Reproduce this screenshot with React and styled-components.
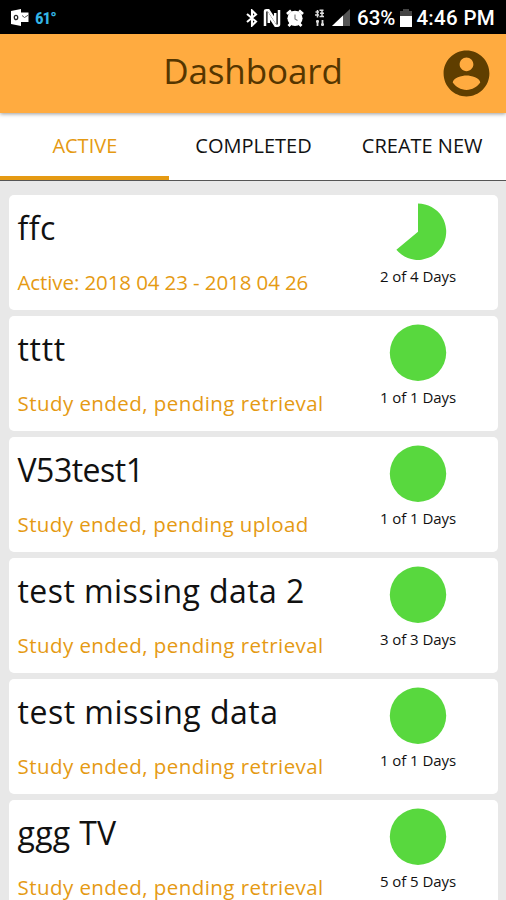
import React from 'react';
import styled, { createGlobalStyle, ThemeProvider } from 'styled-components';

const theme = {
  font: '"Open Sans", "Noto Sans", sans-serif',
  system: 'Roboto, "Liberation Sans", sans-serif',
  narrow: '"Roboto Condensed", "Liberation Sans Narrow", Roboto, sans-serif',
  header: '#ffab40',
  brown: '#5f3e00',
  accent: '#e59a13',
  green: '#58d83e',
};

const GlobalStyle = createGlobalStyle`
  * {
    box-sizing: border-box;
  }
  body {
    margin: 0;
    background: #e8e8e8;
  }
`;

const Screen = styled.div`
  display: flex;
  flex-direction: column;
  width: 506px;
  height: 900px;
  overflow: hidden;
  background: #e8e8e8;
  font-family: ${props => props.theme.font};
`;

const StatusBar = styled.div`
  display: flex;
  flex: none;
  align-items: center;
  justify-content: space-between;
  height: 34px;
  padding: 1px 11px 0 11px;
  background: #000;
  color: #fff;
  font-family: ${props => props.theme.system};
`;

const Group = styled.div`
  display: flex;
  align-items: center;
  gap: ${props => props.$gap || 0}px;
`;

const Temperature = styled.span`
  color: #33b5e5;
  font-family: ${props => props.theme.narrow};
  font-size: 17px;
  font-weight: 700;
  line-height: 20px;
  letter-spacing: -1px;
`;

const StatusText = styled.span`
  font-size: 20.5px;
  font-weight: 500;
  line-height: 24px;
  letter-spacing: ${props => props.$spacing || 0}px;
  white-space: nowrap;
`;

const AppBar = styled.header`
  display: grid;
  flex: none;
  grid-template-columns: 67px 1fr 67px;
  align-items: center;
  height: 79px;
  background: ${props => props.theme.header};
  box-shadow: 0 1px 4px rgba(0, 0, 0, 0.4);
  z-index: 1;
`;

const Title = styled.h1`
  grid-column: 2;
  margin: 0;
  padding-bottom: 6px;
  color: #553600;
  font-size: 35px;
  font-weight: 400;
  line-height: 44px;
  text-align: center;
  letter-spacing: -0.1px;
`;

const Tabs = styled.nav`
  display: grid;
  flex: none;
  grid-template-columns: repeat(3, 1fr);
  height: 68px;
  background: #fff;
  border-bottom: 1px solid #555;
`;

const Tab = styled.div`
  display: flex;
  align-items: center;
  justify-content: center;
  padding: 2px 0 0 1px;
  color: ${props => (props.$active ? props.theme.accent : '#111')};
  border-bottom: 4px solid ${props => (props.$active ? '#e59a13' : 'transparent')};
  font-size: 20px;
  white-space: nowrap;
`;

const List = styled.main`
  display: flex;
  flex-direction: column;
  gap: 6px;
  padding: 14px 8px 0 9px;
`;

const Card = styled.article`
  display: grid;
  flex: none;
  grid-template-columns: 1fr 160px;
  height: 115px;
  padding-left: 8.5px;
  background: #fff;
  border-radius: 5px;
`;

const Info = styled.div`
  display: flex;
  flex-direction: column;
`;

const Name = styled.h2`
  margin: 11px 0 0;
  color: #111;
  font-size: 32px;
  font-weight: 400;
  line-height: 44px;
  letter-spacing: ${props => props.$spacing}px;
  white-space: nowrap;
`;

const Status = styled.p`
  margin: 20px 0 0;
  color: ${props => props.theme.accent};
  font-size: 20.5px;
  line-height: 24px;
  letter-spacing: ${props => props.$spacing}px;
  white-space: nowrap;
`;

const Progress = styled.div`
  display: flex;
  flex-direction: column;
  align-items: center;
  padding-top: 8px;
`;

const Days = styled.span`
  margin-top: 4px;
  color: #111;
  font-size: 15px;
  font-weight: 500;
  line-height: 22px;
  letter-spacing: -0.05px;
  white-space: nowrap;
`;

const OutlookIcon = () => (
  <svg width="18" height="17" viewBox="0 0 18 17">
    <path d="M0 2L10 0V17L0 15Z" fill="#fff" />
    <path d="M10 3.5H17.5V13H10Z" fill="#fff" />
    <path d="M11 6.5L13.5 8.5L17.5 6" stroke="#555" fill="none" />
    <ellipse cx="5" cy="8.5" rx="1.7" ry="2.1" stroke="#222" strokeWidth="1.3" fill="none" />
  </svg>
);

const BluetoothIcon = () => (
  <svg width="12" height="18" viewBox="0 0 12 18">
    <path d="M1 5L10 12.5L6 16.5V1.5L10 5.5L1 13" stroke="#fff" strokeWidth="2.1" fill="none" />
  </svg>
);

const NfcIcon = () => (
  <svg width="18" height="18" viewBox="0 0 18 18">
    <path d="M2 17V2.5Q2 1.3 3.5 1.3H5.5L12.2 11.5V4" stroke="#fff" strokeWidth="2.5" fill="none" />
    <path d="M16 1V15.5Q16 16.7 14.5 16.7H12.5L5.8 6.5V14" stroke="#fff" strokeWidth="2.5" fill="none" />
  </svg>
);

const AlarmIcon = () => (
  <svg width="18" height="18" viewBox="0 0 18 18">
    <path d="M1 5L5 1.5M17 5L13 1.5M2.5 17L5 14.5M15.5 17L13 14.5" stroke="#fff" strokeWidth="2.8" />
    <circle cx="9" cy="9.3" r="7.6" fill="#fff" />
    <path d="M9 5.5V10L11.5 11.5" stroke="#777" strokeWidth="1.1" fill="none" />
  </svg>
);

const DataIcon = () => (
  <svg width="14" height="18" viewBox="-3 0 14 18">
    <path d="M1.5 3H5M5.5 1.2H9.5M1 6H5M6 4.3H10M5.5 7.5H10M3.5 1V8.5M8 1V8" stroke="#ddd" strokeWidth="1.5" />
    <path d="M3.5 11V17M8.5 11V17M2 12.5H5M7 15.5H10" stroke="#ddd" strokeWidth="1.8" />
  </svg>
);

const SignalIcon = () => (
  <svg width="18" height="17" viewBox="0 0 18 17">
    <path d="M0 17L18 0V17Z" fill="#555" />
    <path d="M0 17L11 6.6V17Z" fill="#fff" />
  </svg>
);

const BatteryIcon = () => (
  <svg width="12" height="18" viewBox="0 0 12 18">
    <path d="M3 0H9V2H12V18H0V2H3Z" fill="#444" />
    <path d="M0 7H12V18H0Z" fill="#fff" />
  </svg>
);

const AccountIcon = () => (
  <svg width="55" height="55" viewBox="0 0 24 24" fill={theme.brown}>
    <path d="M12 2C6.48 2 2 6.48 2 12s4.48 10 10 10 10-4.48 10-10S17.52 2 12 2zm0 3c1.66 0 3 1.34 3 3s-1.34 3-3 3-3-1.34-3-3 1.34-3 3-3zm0 14.2c-2.5 0-4.71-1.28-6-3.22.03-1.99 4-3.08 6-3.08 1.99 0 5.97 1.09 6 3.08-1.29 1.94-3.5 3.22-6 3.22z" />
  </svg>
);

// filled wedge going clockwise from twelve o'clock
const Pie = ({ value }) => {
  const r = 28.2;
  const angle = value * 2 * Math.PI;
  const x = 29 + r * Math.sin(angle);
  const y = 28.7 - r * Math.cos(angle);
  return (
    <svg width="58" height="58" viewBox="0 0 58 58" fill={theme.green}>
      {value >= 1
        ? <circle cx="29" cy="28.7" r={r} />
        : <path d={`M29 28.7V${28.7 - r}A${r} ${r} 0 ${value > 0.5 ? 1 : 0} 1 ${x} ${y}Z`} />}
    </svg>
  );
};

const studies = [
  { name: 'ffc', status: 'Active: 2018 04 23 - 2018 04 26', days: '2 of 4 Days', value: 0.639, nameSpacing: 0.5, statusSpacing: -0.1 },
  { name: 'tttt', status: 'Study ended, pending retrieval', days: '1 of 1 Days', value: 1, nameSpacing: 0.7, statusSpacing: 0.44 },
  { name: 'V53test1', status: 'Study ended, pending upload', days: '1 of 1 Days', value: 1, nameSpacing: -0.5, statusSpacing: 0.4 },
  { name: 'test missing data 2', status: 'Study ended, pending retrieval', days: '3 of 3 Days', value: 1, nameSpacing: 0.43, statusSpacing: 0.44 },
  { name: 'test missing data', status: 'Study ended, pending retrieval', days: '1 of 1 Days', value: 1, nameSpacing: 0.5, statusSpacing: 0.44 },
  { name: 'ggg TV', status: 'Study ended, pending retrieval', days: '5 of 5 Days', value: 1, nameSpacing: 0.3, statusSpacing: 0.44 },
];

export default () => (
  <ThemeProvider theme={theme}>
    <GlobalStyle />
    <Screen>
      <StatusBar>
        <Group $gap={6}>
          <OutlookIcon />
          <Temperature>61°</Temperature>
        </Group>
        <Group $gap={7}>
          <Group $gap={5}>
            <BluetoothIcon />
            <NfcIcon />
            <AlarmIcon />
          </Group>
          <DataIcon />
          <SignalIcon />
          <Group $gap={4.5}>
            <StatusText>63%</StatusText>
            <BatteryIcon />
            <StatusText $spacing={0.3}>4:46 PM</StatusText>
          </Group>
        </Group>
      </StatusBar>
      <AppBar>
        <Title>Dashboard</Title>
        <AccountIcon />
      </AppBar>
      <Tabs>
        <Tab $active>ACTIVE</Tab>
        <Tab>COMPLETED</Tab>
        <Tab>CREATE NEW</Tab>
      </Tabs>
      <List>
        {studies.map((study, i) => (
          <Card key={i}>
            <Info>
              <Name $spacing={study.nameSpacing}>{study.name}</Name>
              <Status $spacing={study.statusSpacing}>{study.status}</Status>
            </Info>
            <Progress>
              <Pie value={study.value} />
              <Days>{study.days}</Days>
            </Progress>
          </Card>
        ))}
      </List>
    </Screen>
  </ThemeProvider>
);
